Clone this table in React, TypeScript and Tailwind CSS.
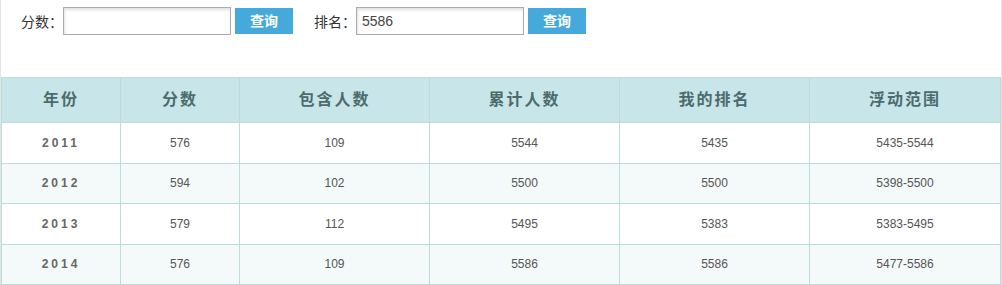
const rows = [
  { year: '2011', score: '576', count: '109', total: '5544', rank: '5435', range: '5435-5544' },
  { year: '2012', score: '594', count: '102', total: '5500', rank: '5500', range: '5398-5500' },
  { year: '2013', score: '579', count: '112', total: '5495', rank: '5383', range: '5383-5495' },
  { year: '2014', score: '576', count: '109', total: '5586', rank: '5586', range: '5477-5586' },
];

const heads = ['年份', '分数', '包含人数', '累计人数', '我的排名', '浮动范围'];
const widths = ['w-[119px]', 'w-[119px]', 'w-[190px]', 'w-[190px]', 'w-[190px]', 'w-[191px]'];

function SearchField({ label, value }: { label: string; value: string }) {
  return (
    <div className="flex items-center">
      <span
        className="text-[14px] text-[#333]"
        style={{ fontFamily: "'Noto Sans CJK SC', sans-serif" }}
      >
        {label}
      </span>
      <input
        readOnly
        value={value}
        className="h-[28px] w-[168px] border border-[#ababab] bg-white px-[5px] text-[14px] text-[#444] shadow-[inset_1px_2px_3px_rgba(0,0,0,0.12)] outline-none"
      />
      <button className="ml-[4px] h-[26px] w-[58px] bg-[#46a9dc] text-[14px] font-bold text-white">
        查询
      </button>
    </div>
  );
}

export default function App() {
  return (
    <div
      className="w-[1002px] border-x border-[#e3e3e3] bg-white"
      style={{ fontFamily: "'Liberation Sans', 'Noto Sans CJK SC', sans-serif" }}
    >
      {/* Search bar */}
      <div className="flex h-[77px] items-start gap-[21px] pl-[20px] pt-[7px]">
        <SearchField label="分数：" value="" />
        <SearchField label="排名：" value="5586" />
      </div>

      {/* Results */}
      <table className="w-[1000px] table-fixed border-collapse">
        <thead>
          <tr className="h-[45px] bg-[#c8e6e9]">
            {heads.map((h, i) => (
              <th
                key={h}
                className={`${widths[i]} border border-[#bcdcdc] text-[16px] font-bold tracking-[2px] text-[#4c6b6c]`}
              >
                {h}
              </th>
            ))}
          </tr>
        </thead>
        <tbody>
          {rows.map((r, i) => (
            <tr key={r.year} className={`h-[40.5px] ${i % 2 ? 'bg-[#f4fafa]' : 'bg-white'}`}>
              <td className="border border-[#bcdcdc] text-center text-[12px] font-bold tracking-[3px] text-[#666]">
                {r.year}
              </td>
              <td className="border border-[#bcdcdc] text-center text-[12px] text-[#555]">{r.score}</td>
              <td className="border border-[#bcdcdc] text-center text-[12px] text-[#555]">{r.count}</td>
              <td className="border border-[#bcdcdc] text-center text-[12px] text-[#555]">{r.total}</td>
              <td className="border border-[#bcdcdc] text-center text-[12px] text-[#555]">{r.rank}</td>
              <td className="border border-[#bcdcdc] text-center text-[12px] text-[#555]">{r.range}</td>
            </tr>
          ))}
        </tbody>
      </table>
    </div>
  );
}
